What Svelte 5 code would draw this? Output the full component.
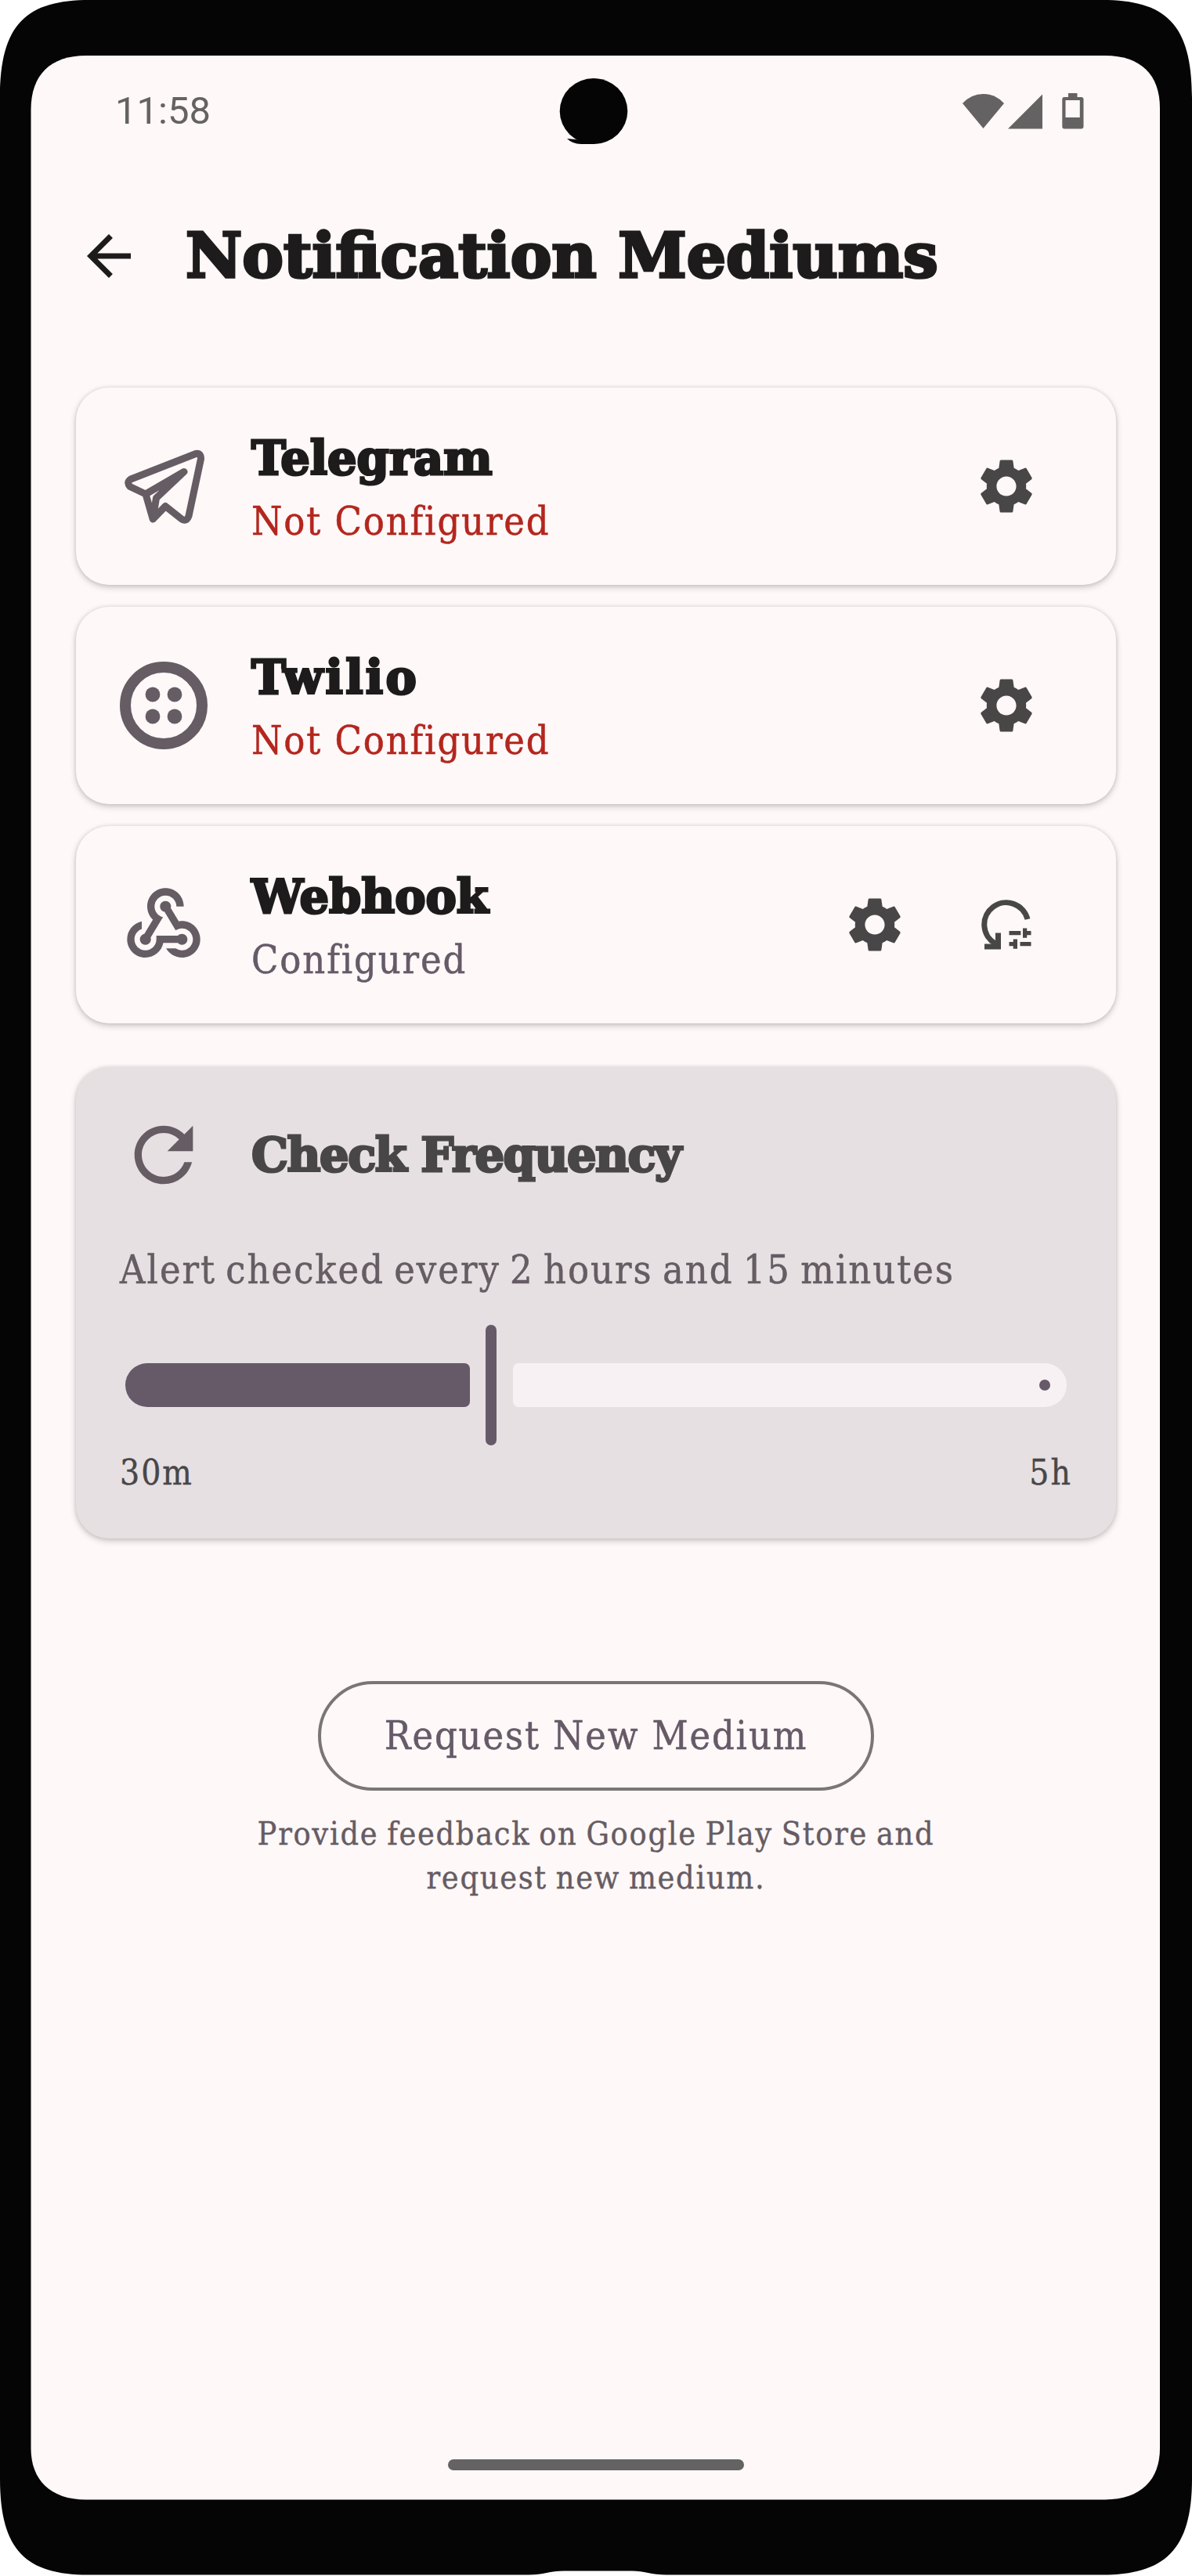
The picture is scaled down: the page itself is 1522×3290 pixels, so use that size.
<script>
  const mediums = [
    { name: 'Telegram', key: 'telegram', configured: false, resettable: false },
    { name: 'Twilio', key: 'twilio', configured: false, resettable: false },
    { name: 'Webhook', key: 'webhook', configured: true, resettable: true }
  ];
</script>

<div class="device">
  <svg class="bezel" viewBox="0 0 1522 3290" aria-hidden="true">
    <path
      fill="#050505"
      d="M0 125C0 30 34 0 115 0H1407C1488 0 1522 30 1522 125V3166C1522 3258 1486 3288.500 1407 3288.500H851C832 3288.500 822 3283.500 807 3283.500H720C702 3283.500 694 3288.500 675 3288.500H113C34 3288.500 0 3258 0 3166Z"
    />
    <path
      fill="#fef8f8"
      d="M39.500 140C39.500 96 64 71 110 71H1411C1457 71 1481 96 1481 138V3127C1481 3167 1457 3192 1411 3192.500H110C64 3192.500 39.500 3167 39.500 3127Z"
    />
  </svg>

  <header class="status">
    <span class="clock">11:58</span>
    <svg class="camera" viewBox="0 0 88 86">
      <ellipse cx="44" cy="42" rx="43.300" ry="42" fill="#050505" />
      <path d="M10 77L20 78L44 80V84H28Q17 84 10 77Z" fill="#050505" />
    </svg>
    <svg class="signals" viewBox="0 0 155 46" fill="#656263">
      <path d="M0 13Q11 1 26.500 1T53 13L26.500 45Z" />
      <path d="M58 45.500L102 1.500V45.500Z" />
      <path
        fill-rule="evenodd"
        d="M135 0H146.500V5H151.500Q154.500 5 154.500 8V42.500Q154.500 45.500 151.500 45.500H130Q127.300 45.500 127.300 42.500V8Q127.300 5 130 5H135ZM131.500 9V31H149.800V9Z"
      />
    </svg>
  </header>

  <div class="appbar">
    <svg class="back" viewBox="0 0 24 24">
      <path d="M20 11H7.830l5.590-5.590L12 4l-8 8 8 8 1.410-1.410L7.830 13H20v-2z" />
    </svg>
    <h1>Notification Mediums</h1>
  </div>

  <main>
    {#each mediums as m}
      <section class="card medium">
        {#if m.key === 'telegram'}
          <svg class="lead" viewBox="0 0 112 112">
            <g fill="none" stroke="#665c63" stroke-width="9" stroke-linejoin="round">
              <path d="M97 14.500L14 47Q8 51 13 56.500L33 66L42.200 98L58.200 81.500L79 98Q85 102 88 94L103.500 21Q103.500 13 97 14.500Z" />
              <path d="M33 66L82 37.500L46.500 71L42.200 98" />
            </g>
          </svg>
        {:else if m.key === 'twilio'}
          <svg class="lead" viewBox="0 0 112 112" fill="#665c63">
            <circle cx="56" cy="56" r="49" fill="none" stroke="#665c63" stroke-width="14" />
            <circle cx="42" cy="42" r="9.400" /><circle cx="70" cy="42" r="9.400" />
            <circle cx="42" cy="70" r="9.400" /><circle cx="70" cy="70" r="9.400" />
          </svg>
        {:else}
          <svg class="lead" viewBox="0 0 24 24" fill="#665c63">
            <path d="M10 15h5.880c.27-.31.67-.5 1.120-.5.83 0 1.500.67 1.500 1.500s-.67 1.500-1.500 1.500c-.44 0-.84-.19-1.120-.5H11.900c-.46 2.280-2.480 4-4.900 4-2.760 0-5-2.240-5-5 0-2.420 1.720-4.440 4-4.900v2.070c-1.160.41-2 1.530-2 2.830 0 1.650 1.350 3 3 3s3-1.350 3-3v-1zm2.500-11c1.650 0 3 1.350 3 3h2c0-2.760-2.240-5-5-5s-5 2.240-5 5c0 1.430.6 2.710 1.550 3.620l-2.350 3.900c-.68.14-1.200.75-1.200 1.480 0 .83.67 1.500 1.500 1.500s1.500-.67 1.500-1.500c0-.16-.02-.31-.07-.45l3.380-5.630C10.490 9.610 9.500 8.420 9.500 7c0-1.650 1.350-3 3-3zm4.500 9c-.64 0-1.230.2-1.720.54l-3.050-5.070C11.530 8.350 11 7.740 11 7c0-.83.67-1.500 1.500-1.500S14 6.170 14 7c0 .15-.02.29-.06.43l2.190 3.650c.28-.05.57-.08.87-.08 2.760 0 5 2.240 5 5s-2.240 5-5 5c-1.850 0-3.470-1.010-4.330-2.500h2.670c.48.32 1.050.5 1.660.5 1.650 0 3-1.350 3-3s-1.350-3-3-3z" />
          </svg>
        {/if}
        <div class="info">
          <h2 class={m.key}>{m.name}</h2>
          <p class:ok={m.configured}>{m.configured ? 'Configured' : 'Not Configured'}</p>
        </div>
        <div class="actions">
          <svg class="action" viewBox="0 0 24 24">
            <path d="M19.140 12.940c.04-.3.06-.61.06-.94 0-.32-.02-.64-.07-.94l2.030-1.580c.18-.14.23-.41.12-.61l-1.920-3.320c-.12-.22-.37-.29-.59-.22l-2.390.96c-.5-.38-1.030-.7-1.620-.94l-.36-2.540c-.04-.24-.24-.41-.48-.41h-3.840c-.24 0-.43.17-.47.41l-.36 2.540c-.59.24-1.130.57-1.620.94l-2.390-.96c-.22-.08-.47 0-.59.22L2.740 8.870c-.12.21-.08.47.12.61l2.030 1.580c-.05.3-.09.63-.09.94s.02.64.07.94l-2.030 1.580c-.18.14-.23.41-.12.61l1.920 3.320c.12.22.37.29.59.22l2.390-.96c.5.38 1.030.7 1.620.94l.36 2.540c.05.24.24.41.48.41h3.840c.24 0 .44-.17.47-.41l.36-2.540c.59-.24 1.130-.56 1.620-.94l2.390.96c.22.08.47 0 .59-.22l1.920-3.320c.12-.22.07-.47-.12-.61l-2.010-1.580zM12 15.600c-1.980 0-3.600-1.620-3.600-3.600s1.620-3.600 3.600-3.600 3.600 1.620 3.600 3.600-1.620 3.600-3.600 3.600z" />
          </svg>
          {#if m.resettable}
            <svg class="action" viewBox="0 0 24 24">
              <path d="M19.700 10A8 8 0 1 0 8 18.900" fill="none" stroke="#484647" stroke-width="2" />
              <path d="M8 15h2v6H4v-2h4zM13 14.250h4.250v1.500H13zM18 13.250h1.500v1H21v1.500h-1.500v1H18zM14.500 17.250H16v3.500h-1.500v-1H13v-1.500h1.500zM17 18.250h4v1.500h-4z" />
            </svg>
          {/if}
        </div>
      </section>
    {/each}

    <section class="card frequency">
      <div class="heading">
        <svg class="lead" viewBox="0 0 24 24" fill="#665c63">
          <path d="M17.650 6.350C16.200 4.900 14.210 4 12 4c-4.420 0-7.990 3.580-7.990 8s3.570 8 7.990 8c3.730 0 6.840-2.550 7.730-6h-2.080c-.82 2.330-3.040 4-5.650 4-3.310 0-6-2.690-6-6s2.690-6 6-6c1.660 0 3.140.69 4.220 1.780L13 11h7V4l-2.350 2.350z" />
        </svg>
        <h2 class="check">Check Frequency</h2>
      </div>
      <p class="summary">Alert checked every 2 hours and 15 minutes</p>
      <div class="slider">
        <div class="active"></div>
        <div class="thumb"></div>
        <div class="rest"><i></i></div>
      </div>
      <div class="range"><span>30m</span><span>5h</span></div>
    </section>

    <div class="request">
      <button>Request New Medium</button>
      <p>Provide feedback on Google Play Store and<br />request new medium.</p>
    </div>
  </main>

  <footer><div class="home"></div></footer>
</div>

<style>
  :global(body) {
    background: #fff;
  }
  .device {
    position: relative;
    box-sizing: border-box;
    width: 1522px;
    height: 3290px;
    padding: 71px 41px 98px;
    display: flex;
    flex-direction: column;
    font-family: 'DejaVu Serif Condensed', 'DejaVu Serif', serif;
    font-stretch: condensed;
    color: #1d1b1c;
    overflow: hidden;
  }
  .bezel {
    position: absolute;
    inset: 0;
    width: 1522px;
    height: 3290px;
    z-index: -1;
  }
  svg {
    display: block;
    flex: none;
  }
  h1,
  h2,
  p {
    margin: 0;
    white-space: nowrap;
  }
  h1,
  h2 {
    font-family: 'DejaVu Serif', serif;
    font-stretch: normal;
    font-weight: 700;
  }
  .status {
    height: 142px;
    display: grid;
    grid-template-columns: 1fr 88px 1fr;
    align-items: center;
    padding: 0 97px 0 106px;
    color: #656263;
  }
  .clock {
    font: 49px/60px Roboto, sans-serif;
  }
  .camera {
    width: 88px;
    height: 86px;
    margin-left: -8px;
    margin-top: 2px;
  }
  .signals {
    width: 155px;
    height: 46px;
    justify-self: end;
  }
  .appbar {
    height: 228px;
    display: flex;
    align-items: center;
    gap: 56px;
    padding-left: 56px;
  }
  .back {
    width: 84px;
    height: 84px;
    fill: #1d1b1c;
  }
  h1 {
    font-size: 79px;
    line-height: 112px;
    -webkit-text-stroke: 3.5px currentColor;
  }
  main {
    padding: 54px 56px 0;
    display: flex;
    flex-direction: column;
    gap: 28px;
  }
  .card {
    box-sizing: border-box;
    border-radius: 42px;
    box-shadow: 0 3px 8px rgba(0, 0, 0, 0.2), 0 0 5px rgba(0, 0, 0, 0.1);
  }
  .medium {
    height: 252px;
    padding: 0 56px;
    display: flex;
    align-items: center;
    gap: 56px;
    background: #fef8f8;
  }
  .lead {
    width: 112px;
    height: 112px;
  }
  .info {
    flex: 1;
  }
  h2 {
    font-size: 59px;
    line-height: 89px;
    -webkit-text-stroke: 3px currentColor;
  }
  .twilio {
    letter-spacing: 3.2px;
  }
  .check {
    letter-spacing: -1.4px;
  }
  .info p {
    font-size: 50px;
    line-height: 72px;
    letter-spacing: 1.9px;
    color: #b3261e;
    -webkit-text-stroke: 0.5px currentColor;
  }
  .info p.ok {
    color: #665a68;
  }
  .actions {
    display: flex;
    gap: 84px;
    padding-right: 42px;
  }
  .action {
    width: 84px;
    height: 84px;
    fill: #484647;
  }
  .frequency {
    height: 602px;
    margin-top: 28px;
    padding: 56px;
    background: #e6e0e2;
    color: #484647;
  }
  .heading {
    display: flex;
    align-items: center;
    gap: 56px;
  }
  .summary {
    margin-top: 49px;
    font-size: 50px;
    line-height: 84px;
    letter-spacing: 2px;
    word-spacing: -4px;
    color: #665c63;
    -webkit-text-stroke: 0.5px currentColor;
  }
  .slider {
    height: 154px;
    margin: 28px 7px 0;
    display: flex;
    align-items: center;
  }
  .active {
    width: 440px;
    height: 56px;
    border-radius: 28px 7px 7px 28px;
    background: #665a68;
  }
  .thumb {
    width: 14px;
    height: 154px;
    margin: 0 21px 0 20px;
    border-radius: 7px;
    background: #665a68;
  }
  .rest {
    flex: 1;
    height: 56px;
    border-radius: 7px 28px 28px 7px;
    background: #f7f1f4;
    display: flex;
    align-items: center;
    justify-content: flex-end;
  }
  .rest i {
    width: 14px;
    height: 14px;
    margin-right: 21px;
    border-radius: 50%;
    background: #665a68;
  }
  .range {
    display: flex;
    justify-content: space-between;
    font-size: 44px;
    line-height: 70px;
    letter-spacing: 2px;
    -webkit-text-stroke: 0.4px currentColor;
  }
  .request {
    margin-top: 154px;
    display: flex;
    flex-direction: column;
    align-items: center;
  }
  button {
    box-sizing: border-box;
    width: 710px;
    height: 140px;
    padding: 0;
    border: 4px solid #7b7676;
    border-radius: 70px;
    background: none;
    color: #665a68;
    font-family: inherit;
    font-stretch: inherit;
    font-size: 50px;
    letter-spacing: 1.9px;
    -webkit-text-stroke: 0.5px currentColor;
    white-space: nowrap;
  }
  .request p {
    margin-top: 27px;
    font-size: 41px;
    line-height: 56px;
    letter-spacing: 1.7px;
    word-spacing: -2.5px;
    text-align: center;
    color: #665c63;
    -webkit-text-stroke: 0.4px currentColor;
  }
  footer {
    margin-top: auto;
    padding-bottom: 37px;
    display: flex;
    justify-content: center;
  }
  .home {
    width: 378px;
    height: 14px;
    border-radius: 7px;
    background: #656263;
  }
</style>
